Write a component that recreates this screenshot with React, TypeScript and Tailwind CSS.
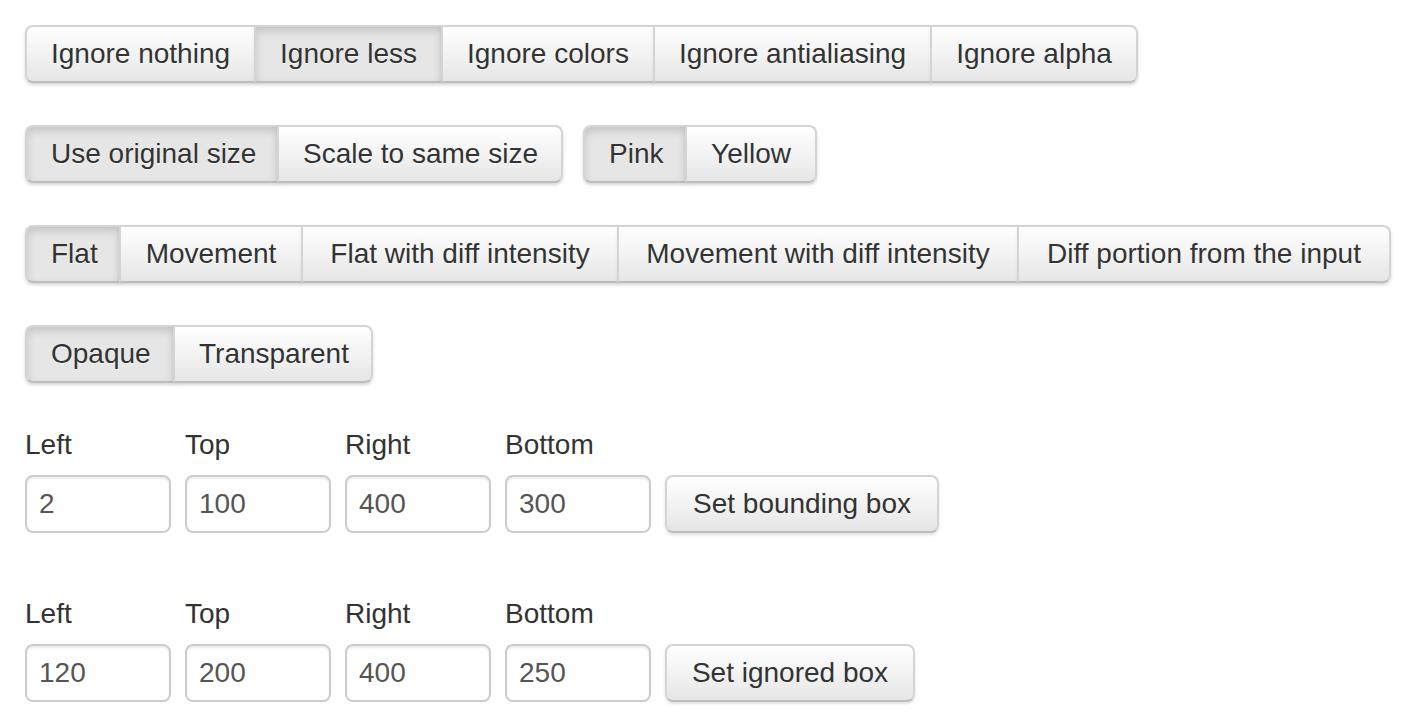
import React from "react";

type Item = { label: string; active?: boolean; w?: string };

const btnBase =
  "h-[58px] px-6 text-[28px] leading-[40px] text-center whitespace-nowrap text-[#333] [text-shadow:0_1px_1px_rgba(255,255,255,0.75)] border-2 border-[#d4d4d4] border-b-[#bcbcbc] -ml-[2px] first:ml-0 first:rounded-l-lg last:rounded-r-lg";
const btnNormal =
  "bg-gradient-to-b from-white to-[#e6e6e6] shadow-[inset_0_2px_0_rgba(255,255,255,0.2),0_2px_4px_rgba(0,0,0,0.05)]";
const btnActive =
  "bg-[#e6e6e6] shadow-[inset_0_4px_8px_rgba(0,0,0,0.15),0_2px_4px_rgba(0,0,0,0.05)]";

function Group({ items }: { items: Item[] }) {
  return (
    <div className="flex rounded-lg shadow-[0_2px_3px_rgba(0,0,0,0.12)]">
      {items.map((it) => (
        <button
          key={it.label}
          className={`${btnBase} ${it.active ? btnActive : btnNormal} ${it.w ?? ""}`}
        >
          {it.label}
        </button>
      ))}
    </div>
  );
}

function BoxRow({
  values,
  action,
  actionW,
}: {
  values: string[];
  action: string;
  actionW: string;
}) {
  const labels = ["Left", "Top", "Right", "Bottom"];
  return (
    <div className="flex items-end gap-[14px]">
      {labels.map((l, i) => (
        <div key={l} className="flex flex-col">
          <label className="text-[28px] leading-[40px] mb-[10px] text-[#333]">
            {l}
          </label>
          <input
            defaultValue={values[i]}
            className="w-[146px] h-[58px] px-3 text-[28px] text-[#555] border-2 border-[#ccc] rounded-lg bg-white shadow-[inset_0_2px_2px_rgba(0,0,0,0.075)] outline-none"
          />
        </div>
      ))}
      <button
        className={`h-[58px] px-6 text-[28px] leading-[40px] text-center whitespace-nowrap text-[#333] rounded-lg border-2 border-[#d4d4d4] border-b-[#bcbcbc] bg-gradient-to-b from-white to-[#e6e6e6] shadow-[0_2px_3px_rgba(0,0,0,0.12)] ${actionW}`}
      >
        {action}
      </button>
    </div>
  );
}

export default function App() {
  return (
    <div className="min-h-screen bg-white px-[25px] pt-[25px] font-['Liberation_Sans',Arial,sans-serif]">
      <div className="flex flex-col gap-[42px]">
        <div className="flex">
          <Group
            items={[
              { label: "Ignore nothing" },
              { label: "Ignore less", active: true },
              { label: "Ignore colors" },
              { label: "Ignore antialiasing" },
              { label: "Ignore alpha" },
            ]}
          />
        </div>
        <div className="flex gap-5">
          <Group
            items={[
              { label: "Use original size", active: true, w: "w-[254px]" },
              { label: "Scale to same size", w: "w-[286px]" },
            ]}
          />
          <Group
            items={[
              { label: "Pink", active: true, w: "w-[104px]" },
              { label: "Yellow", w: "w-[132px]" },
            ]}
          />
        </div>
        <div className="flex">
          <Group
            items={[
              { label: "Flat", active: true, w: "w-[96px]" },
              { label: "Movement", w: "w-[184px]" },
              { label: "Flat with diff intensity", w: "w-[318px]" },
              { label: "Movement with diff intensity", w: "w-[402px]" },
              { label: "Diff portion from the input", w: "w-[374px]" },
            ]}
          />
        </div>
        <div className="flex">
          <Group
            items={[
              { label: "Opaque", active: true, w: "w-[150px]" },
              { label: "Transparent", w: "w-[200px]" },
            ]}
          />
        </div>
      </div>
      <div className="mt-[42px] flex flex-col gap-[61px]">
        <BoxRow
          values={["2", "100", "400", "300"]}
          action="Set bounding box"
          actionW="w-[274px]"
        />
        <BoxRow
          values={["120", "200", "400", "250"]}
          action="Set ignored box"
          actionW="w-[250px]"
        />
      </div>
    </div>
  );
}
